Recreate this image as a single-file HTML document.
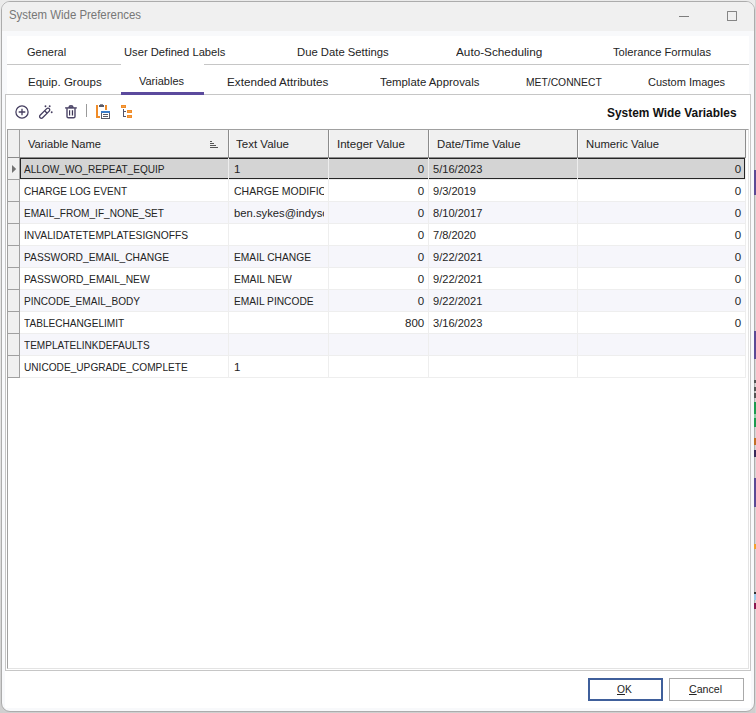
<!DOCTYPE html><html><head><meta charset="utf-8"><title>System Wide Preferences</title>
<style>
html,body{margin:0;padding:0}
body{width:756px;height:713px;position:relative;overflow:hidden;background:#e3e3e3;font-family:"Liberation Sans",sans-serif;color:#242424}
div,span.clip{position:absolute;box-sizing:border-box}
.t{position:absolute;white-space:pre;line-height:26px;height:26px;display:block}
.t u{text-decoration:underline;text-underline-offset:0.5px;text-decoration-thickness:1px}
.ttl{color:#777}
.b{font-weight:bold;color:#111}
.clip{overflow:hidden;display:block}
svg{position:absolute;overflow:visible}
</style></head>
<body>
<div style="left:0;top:0;width:756px;height:713px;background:linear-gradient(#ebebeb,#e4e4e4 60%,#cfcfcf)"></div>
<div style="left:755px;top:0;width:1px;height:713px;background:#d6d6d6"></div>
<div style="left:1px;top:1px;width:754px;height:711px;border:1px solid #acacac;border-radius:9px;background:#f8f9fb;overflow:hidden"><div style="left:0;top:0;width:752px;height:29px;background:#f0f0f0"></div></div>
<div style="left:754.3px;top:170px;width:1.7px;height:25px;background:#5b4a95"></div>
<div style="left:754.3px;top:331px;width:1.7px;height:28px;background:#5b4a95"></div>
<div style="left:754.3px;top:380px;width:1.7px;height:3px;background:#555"></div>
<div style="left:754.3px;top:387px;width:1.7px;height:4px;background:#555"></div>
<div style="left:754.3px;top:393px;width:1.7px;height:5px;background:#555"></div>
<div style="left:754.3px;top:402px;width:1.7px;height:12px;background:#1f9a50"></div>
<div style="left:754.3px;top:414px;width:1.7px;height:4px;background:#8fd0a8"></div>
<div style="left:754.3px;top:418px;width:1.7px;height:9px;background:#1f9a50"></div>
<div style="left:754.3px;top:438px;width:1.7px;height:7px;background:#c07028"></div>
<div style="left:754.3px;top:450px;width:1.7px;height:7px;background:#3a2a5a"></div>
<div style="left:754.3px;top:478px;width:1.7px;height:29px;background:#5b4a95"></div>
<div style="left:754.3px;top:544px;width:1.7px;height:5px;background:#f0a030"></div>
<div style="left:754.3px;top:592px;width:1.7px;height:2px;background:#333"></div>
<div style="left:754.3px;top:594px;width:1.7px;height:6px;background:#9cc8e8"></div>
<div style="left:754.3px;top:603px;width:1.7px;height:6px;background:#8a1850"></div>
<div style="left:679px;top:15.5px;width:10px;height:1px;background:#7d7d7d"></div>
<div style="left:727px;top:11px;width:10px;height:10px;border:1px solid #858585;border-radius:0.5px"></div>
<div style="left:7px;top:36px;width:742px;height:59px;background:#fff"></div>
<div style="left:5px;top:670px;width:746px;height:38px;background:#fff"></div>
<div style="left:7px;top:64px;width:114px;height:1px;background:#c6c6c6"></div>
<div style="left:204px;top:64px;width:545px;height:1px;background:#c6c6c6"></div>
<div style="left:5px;top:94px;width:746px;height:577px;border:1px solid #c6c6c6;background:#fff"></div>
<div style="left:121px;top:92px;width:83px;height:3px;background:#5b4a9d"></div>
<div style="left:7px;top:129px;width:742px;height:540px;border:1px solid #a0a0a0;border-right-color:#e3e3e3;border-bottom-color:#e3e3e3;background:#fff"></div>
<div style="left:8px;top:130px;width:738px;height:27px;background:#f0f0f0"></div>
<div style="left:20px;top:158px;width:725px;height:21px;background:#d4d4d4"></div>
<div style="left:20px;top:179px;width:726px;height:1px;background:#eeeeee"></div>
<div style="left:20px;top:180px;width:725px;height:21px;background:#fff"></div>
<div style="left:20px;top:201px;width:726px;height:1px;background:#eeeeee"></div>
<div style="left:20px;top:202px;width:725px;height:21px;background:#f6f6fb"></div>
<div style="left:20px;top:223px;width:726px;height:1px;background:#eeeeee"></div>
<div style="left:20px;top:224px;width:725px;height:21px;background:#fff"></div>
<div style="left:20px;top:245px;width:726px;height:1px;background:#eeeeee"></div>
<div style="left:20px;top:246px;width:725px;height:21px;background:#f6f6fb"></div>
<div style="left:20px;top:267px;width:726px;height:1px;background:#eeeeee"></div>
<div style="left:20px;top:268px;width:725px;height:21px;background:#fff"></div>
<div style="left:20px;top:289px;width:726px;height:1px;background:#eeeeee"></div>
<div style="left:20px;top:290px;width:725px;height:21px;background:#f6f6fb"></div>
<div style="left:20px;top:311px;width:726px;height:1px;background:#eeeeee"></div>
<div style="left:20px;top:312px;width:725px;height:21px;background:#fff"></div>
<div style="left:20px;top:333px;width:726px;height:1px;background:#eeeeee"></div>
<div style="left:20px;top:334px;width:725px;height:21px;background:#f6f6fb"></div>
<div style="left:20px;top:355px;width:726px;height:1px;background:#eeeeee"></div>
<div style="left:20px;top:356px;width:725px;height:21px;background:#fff"></div>
<div style="left:20px;top:377px;width:726px;height:1px;background:#eeeeee"></div>
<div style="left:228px;top:158px;width:1px;height:220px;background:#eeeeee"></div>
<div style="left:328px;top:158px;width:1px;height:220px;background:#eeeeee"></div>
<div style="left:428px;top:158px;width:1px;height:220px;background:#eeeeee"></div>
<div style="left:577px;top:158px;width:1px;height:220px;background:#eeeeee"></div>
<div style="left:745px;top:158px;width:1px;height:220px;background:#eeeeee"></div>
<div style="left:8px;top:130px;width:12px;height:248px;background:#f0f0f0"></div>
<div style="left:19px;top:130px;width:1px;height:248px;background:#a0a0a0"></div>
<div style="left:8px;top:179px;width:12px;height:1px;background:#a0a0a0"></div>
<div style="left:8px;top:201px;width:12px;height:1px;background:#a0a0a0"></div>
<div style="left:8px;top:223px;width:12px;height:1px;background:#a0a0a0"></div>
<div style="left:8px;top:245px;width:12px;height:1px;background:#a0a0a0"></div>
<div style="left:8px;top:267px;width:12px;height:1px;background:#a0a0a0"></div>
<div style="left:8px;top:289px;width:12px;height:1px;background:#a0a0a0"></div>
<div style="left:8px;top:311px;width:12px;height:1px;background:#a0a0a0"></div>
<div style="left:8px;top:333px;width:12px;height:1px;background:#a0a0a0"></div>
<div style="left:8px;top:355px;width:12px;height:1px;background:#a0a0a0"></div>
<div style="left:8px;top:377px;width:12px;height:1px;background:#a0a0a0"></div>
<div style="left:228px;top:130px;width:1px;height:27px;background:#8c8c8c"></div>
<div style="left:229px;top:130px;width:1px;height:27px;background:#fafafa"></div>
<div style="left:328px;top:130px;width:1px;height:27px;background:#8c8c8c"></div>
<div style="left:329px;top:130px;width:1px;height:27px;background:#fafafa"></div>
<div style="left:428px;top:130px;width:1px;height:27px;background:#8c8c8c"></div>
<div style="left:429px;top:130px;width:1px;height:27px;background:#fafafa"></div>
<div style="left:577px;top:130px;width:1px;height:27px;background:#8c8c8c"></div>
<div style="left:578px;top:130px;width:1px;height:27px;background:#fafafa"></div>
<div style="left:745px;top:130px;width:1px;height:27px;background:#8c8c8c"></div>
<div style="left:746px;top:130px;width:1px;height:27px;background:#fafafa"></div>
<div style="left:8px;top:157px;width:738px;height:1px;background:#8c8c8c"></div>
<div style="left:20px;top:158px;width:725px;height:21px;border:1px solid #262626"></div>
<div style="left:228px;top:158px;width:1px;height:21px;background:#ededed"></div>
<div style="left:328px;top:158px;width:1px;height:21px;background:#ededed"></div>
<div style="left:428px;top:158px;width:1px;height:21px;background:#ededed"></div>
<div style="left:577px;top:158px;width:1px;height:21px;background:#ededed"></div>
<svg style="left:12px;top:165px" width="5" height="8"><path d="M0 0 L4.2 4 L0 8 Z" fill="#737373"></path></svg>
<div style="left:210px;top:141px;width:2px;height:1px;background:#555"></div>
<div style="left:210px;top:143px;width:4px;height:1px;background:#555"></div>
<div style="left:210px;top:145px;width:6px;height:1px;background:#555"></div>
<div style="left:210px;top:147px;width:8px;height:1px;background:#555"></div>
<div style="left:588px;top:678px;width:75px;height:23px;border:2px solid #3f5f9b;background:#fff"></div>
<div style="left:669px;top:678px;width:75px;height:23px;border:1px solid #a9a9a9;background:#fff"></div>
<div style="left:86px;top:104px;width:1px;height:13px;background:#9a9a9a"></div>
<svg style="left:0;top:0" width="756" height="713" viewBox="0 0 756 713" fill="none">
<!-- add (circle plus) -->
<g stroke="#453e60" fill="none">
<circle cx="22" cy="112" r="6.1" stroke-width="1.25"></circle>
<path d="M18.7 112 H25.3 M22 108.7 V115.3" stroke-width="1.3"></path>
</g>
<!-- magic wand -->
<g transform="translate(44.7 113.15) rotate(-45)" stroke="#453e60" stroke-width="1.3" fill="none">
<rect x="-6.5" y="-1.75" width="12.9" height="3.5" rx="1.75"></rect>
<path d="M1.7 -1.8 V1.8"></path>
</g>
<g fill="#453e60">
<circle cx="45.5" cy="106.2" r="0.95"></circle><circle cx="49.7" cy="106.2" r="0.95"></circle><circle cx="51.7" cy="112.3" r="0.95"></circle>
</g>
<!-- trash -->
<g stroke="#4d4668" stroke-width="1.4" fill="none" stroke-linejoin="round">
<path d="M65.1 107.9 H76.8"></path>
<path d="M68.9 107.6 Q69.1 105.8 71 105.8 Q72.9 105.8 73.1 107.6 Z" fill="#8c87a0"></path>
<path d="M67 108 V116.4 Q67 117.8 68.4 117.8 H73.6 Q75 117.8 75 116.4 V108"></path>
<path d="M69.6 110.3 V115.4 M72.5 110.3 V115.4" stroke="#3d3555" stroke-width="1.2"></path>
</g>
<rect x="70.2" y="110.3" width="1.7" height="5.1" fill="#dcdce2"></rect>
<!-- paste -->
<g>
<rect x="96" y="105" width="2" height="13" fill="#f08c28"></rect>
<rect x="96" y="116" width="4" height="2" fill="#f08c28"></rect>
<rect x="105" y="105" width="2" height="5" fill="#f08c28"></rect>
<rect x="99" y="105" width="5" height="2" fill="#5a5a68"></rect>
<rect x="100" y="104" width="3" height="1" fill="#8a8a95"></rect>
<rect x="101" y="111" width="9" height="8" fill="#5a5a68"></rect>
<rect x="102" y="113" width="7" height="5" fill="#fff"></rect>
<rect x="101" y="111" width="9" height="2" fill="#3a7bc8"></rect>
<rect x="103" y="114" width="5" height="1" fill="#5a5a68"></rect>
<rect x="103" y="116" width="5" height="1" fill="#5a5a68"></rect>
</g>
<!-- tree -->
<g>
<rect x="121" y="105" width="5" height="3" fill="#f08c28"></rect>
<rect x="122" y="106" width="3" height="1" fill="#f4a04a"></rect>
<rect x="127" y="110" width="5" height="3" fill="#f08c28"></rect>
<rect x="128" y="111" width="3" height="1" fill="#f4a04a"></rect>
<rect x="127" y="115" width="5" height="3" fill="#f08c28"></rect>
<rect x="128" y="116" width="3" height="1" fill="#f4a04a"></rect>
<rect x="123" y="109" width="1" height="8" fill="#55556a"></rect>
<rect x="124" y="111" width="2" height="1" fill="#55556a"></rect>
<rect x="124" y="116" width="2" height="1" fill="#55556a"></rect>
</g>
</svg>

<span class="t ttl" style="top: 1.64px; font-size: 12.3px; left: 8.5px; transform-origin: 0px 0px; transform: scaleX(0.9286);">System Wide Preferences</span>
<span class="t " style="top: 39.02px; font-size: 11.5px; left: 27px; transform-origin: 0px 0px; transform: scaleX(0.9579);">General</span>
<span class="t " style="top: 39.02px; font-size: 11.5px; left: 123.8px; transform-origin: 0px 0px; transform: scaleX(0.9731);">User Defined Labels</span>
<span class="t " style="top: 39.02px; font-size: 11.5px; left: 297.2px; transform-origin: 0px 0px; transform: scaleX(0.9813);">Due Date Settings</span>
<span class="t " style="top: 39.02px; font-size: 11.5px; left: 455.5px; transform-origin: 0px 0px; transform: scaleX(1.0224);">Auto-Scheduling</span>
<span class="t " style="top: 39.02px; font-size: 11.5px; left: 612.8px; transform-origin: 0px 0px; transform: scaleX(0.9704);">Tolerance Formulas</span>
<span class="t " style="top: 69.02px; font-size: 11.5px; left: 27.5px; transform-origin: 0px 0px; transform: scaleX(1.0025);">Equip. Groups</span>
<span class="t " style="top: 68.02px; font-size: 11.5px; left: 138.8px; transform-origin: 0px 0px; transform: scaleX(0.9555);">Variables</span>
<span class="t " style="top: 69.02px; font-size: 11.5px; left: 226.7px; transform-origin: 0px 0px; transform: scaleX(1.0167);">Extended Attributes</span>
<span class="t " style="top: 69.02px; font-size: 11.5px; left: 379.8px; transform-origin: 0px 0px; transform: scaleX(0.9903);">Template Approvals</span>
<span class="t " style="top: 69.02px; font-size: 11.5px; left: 525.8px; transform-origin: 0px 0px; transform: scaleX(0.8975);">MET/CONNECT</span>
<span class="t " style="top: 69.02px; font-size: 11.5px; left: 647.8px; transform-origin: 0px 0px; transform: scaleX(0.9562);">Custom Images</span>
<span class="t b" style="top: 99.7px; font-size: 12.4px; left: 606.5px; transform-origin: 0px 0px; transform: scaleX(0.9601);">System Wide Variables</span>
<span class="t " style="top: 131.02px; font-size: 11.5px; left: 28px; transform-origin: 0px 0px; transform: scaleX(0.9705);">Variable Name</span>
<span class="t " style="top: 131.02px; font-size: 11.5px; left: 236.2px; transform-origin: 0px 0px; transform: scaleX(1.0027);">Text Value</span>
<span class="t " style="top: 131.02px; font-size: 11.5px; left: 336.9px; transform-origin: 0px 0px; transform: scaleX(1.0035);">Integer Value</span>
<span class="t " style="top: 131.02px; font-size: 11.5px; left: 436.5px; transform-origin: 0px 0px; transform: scaleX(0.9896);">Date/Time Value</span>
<span class="t " style="top: 131.02px; font-size: 11.5px; left: 586px; transform-origin: 0px 0px; transform: scaleX(0.9788);">Numeric Value</span>
<span class="t " style="top: 156.02px; font-size: 11.5px; left: 24.1px; transform-origin: 0px 0px; transform: scaleX(0.8776);">ALLOW_WO_REPEAT_EQUIP</span>
<span class="t " style="top:156.02px;font-size:11.5px;left:233.90px;transform-origin:0 0;">1</span>
<span class="t " style="top:156.02px;font-size:11.5px;right:331.80px;transform-origin:100% 0;">0</span>
<span class="t " style="top: 156.02px; font-size: 11.5px; left: 433.2px; transform-origin: 0px 0px; transform: scaleX(0.9634);">5/16/2023</span>
<span class="t " style="top:156.02px;font-size:11.5px;right:14.80px;transform-origin:100% 0;">0</span>
<span class="t " style="top: 178.02px; font-size: 11.5px; left: 24.1px; transform-origin: 0px 0px; transform: scaleX(0.8713);">CHARGE LOG EVENT</span>
<span class="clip" style="left:229px;top:178.02px;width:95.2px;height:26px"><span class="t" style="left: 5px; top: 0px; font-size: 11.5px; transform-origin: 0px 0px; transform: scaleX(0.9133);">CHARGE MODIFIC</span></span>
<span class="t " style="top:178.02px;font-size:11.5px;right:331.80px;transform-origin:100% 0;">0</span>
<span class="t " style="top: 178.02px; font-size: 11.5px; left: 433.2px; transform-origin: 0px 0px; transform: scaleX(0.9606);">9/3/2019</span>
<span class="t " style="top:178.02px;font-size:11.5px;right:14.80px;transform-origin:100% 0;">0</span>
<span class="t " style="top: 200.02px; font-size: 11.5px; left: 24.1px; transform-origin: 0px 0px; transform: scaleX(0.8763);">EMAIL_FROM_IF_NONE_SET</span>
<span class="clip" style="left:229px;top:200.02px;width:95.2px;height:26px"><span class="t" style="left: 5px; top: 0px; font-size: 11.5px; transform-origin: 0px 0px; transform: scaleX(0.9783);">ben.sykes@indyso</span></span>
<span class="t " style="top:200.02px;font-size:11.5px;right:331.80px;transform-origin:100% 0;">0</span>
<span class="t " style="top: 200.02px; font-size: 11.5px; left: 433.2px; transform-origin: 0px 0px; transform: scaleX(0.9634);">8/10/2017</span>
<span class="t " style="top:200.02px;font-size:11.5px;right:14.80px;transform-origin:100% 0;">0</span>
<span class="t " style="top: 222.02px; font-size: 11.5px; left: 24.1px; transform-origin: 0px 0px; transform: scaleX(0.8912);">INVALIDATETEMPLATESIGNOFFS</span>
<span class="t " style="top:222.02px;font-size:11.5px;right:331.80px;transform-origin:100% 0;">0</span>
<span class="t " style="top: 222.02px; font-size: 11.5px; left: 433.2px; transform-origin: 0px 0px; transform: scaleX(0.9606);">7/8/2020</span>
<span class="t " style="top:222.02px;font-size:11.5px;right:14.80px;transform-origin:100% 0;">0</span>
<span class="t " style="top: 244.02px; font-size: 11.5px; left: 24.1px; transform-origin: 0px 0px; transform: scaleX(0.8909);">PASSWORD_EMAIL_CHANGE</span>
<span class="t " style="top: 244.02px; font-size: 11.5px; left: 233.9px; transform-origin: 0px 0px; transform: scaleX(0.8903);">EMAIL CHANGE</span>
<span class="t " style="top:244.02px;font-size:11.5px;right:331.80px;transform-origin:100% 0;">0</span>
<span class="t " style="top: 244.02px; font-size: 11.5px; left: 433.2px; transform-origin: 0px 0px; transform: scaleX(0.9634);">9/22/2021</span>
<span class="t " style="top:244.02px;font-size:11.5px;right:14.80px;transform-origin:100% 0;">0</span>
<span class="t " style="top: 266.02px; font-size: 11.5px; left: 24.1px; transform-origin: 0px 0px; transform: scaleX(0.8955);">PASSWORD_EMAIL_NEW</span>
<span class="t " style="top: 266.02px; font-size: 11.5px; left: 233.9px; transform-origin: 0px 0px; transform: scaleX(0.9016);">EMAIL NEW</span>
<span class="t " style="top:266.02px;font-size:11.5px;right:331.80px;transform-origin:100% 0;">0</span>
<span class="t " style="top: 266.02px; font-size: 11.5px; left: 433.2px; transform-origin: 0px 0px; transform: scaleX(0.9634);">9/22/2021</span>
<span class="t " style="top:266.02px;font-size:11.5px;right:14.80px;transform-origin:100% 0;">0</span>
<span class="t " style="top: 288.02px; font-size: 11.5px; left: 24.1px; transform-origin: 0px 0px; transform: scaleX(0.8768);">PINCODE_EMAIL_BODY</span>
<span class="t " style="top: 288.02px; font-size: 11.5px; left: 233.9px; transform-origin: 0px 0px; transform: scaleX(0.8875);">EMAIL PINCODE</span>
<span class="t " style="top:288.02px;font-size:11.5px;right:331.80px;transform-origin:100% 0;">0</span>
<span class="t " style="top: 288.02px; font-size: 11.5px; left: 433.2px; transform-origin: 0px 0px; transform: scaleX(0.9634);">9/22/2021</span>
<span class="t " style="top:288.02px;font-size:11.5px;right:14.80px;transform-origin:100% 0;">0</span>
<span class="t " style="top: 310.02px; font-size: 11.5px; left: 24.1px; transform-origin: 0px 0px; transform: scaleX(0.8776);">TABLECHANGELIMIT</span>
<span class="t " style="top:310.02px;font-size:11.5px;right:331.80px;transform-origin:100% 0;">800</span>
<span class="t " style="top: 310.02px; font-size: 11.5px; left: 433.2px; transform-origin: 0px 0px; transform: scaleX(0.9634);">3/16/2023</span>
<span class="t " style="top:310.02px;font-size:11.5px;right:14.80px;transform-origin:100% 0;">0</span>
<span class="t " style="top: 332.02px; font-size: 11.5px; left: 24.1px; transform-origin: 0px 0px; transform: scaleX(0.8729);">TEMPLATELINKDEFAULTS</span>
<span class="t " style="top: 354.02px; font-size: 11.5px; left: 24.1px; transform-origin: 0px 0px; transform: scaleX(0.8803);">UNICODE_UPGRADE_COMPLETE</span>
<span class="t " style="top:354.02px;font-size:11.5px;left:233.90px;transform-origin:0 0;">1</span>
<span class="t " style="top: 675.52px; font-size: 11.5px; left: 617px; transform-origin: 0px 0px; transform: scaleX(0.8902);"><u>O</u>K</span>
<span class="t " style="top: 675.52px; font-size: 11.5px; left: 689.1px; transform-origin: 0px 0px; transform: scaleX(0.9215);"><u>C</u>ancel</span>
</body></html>
